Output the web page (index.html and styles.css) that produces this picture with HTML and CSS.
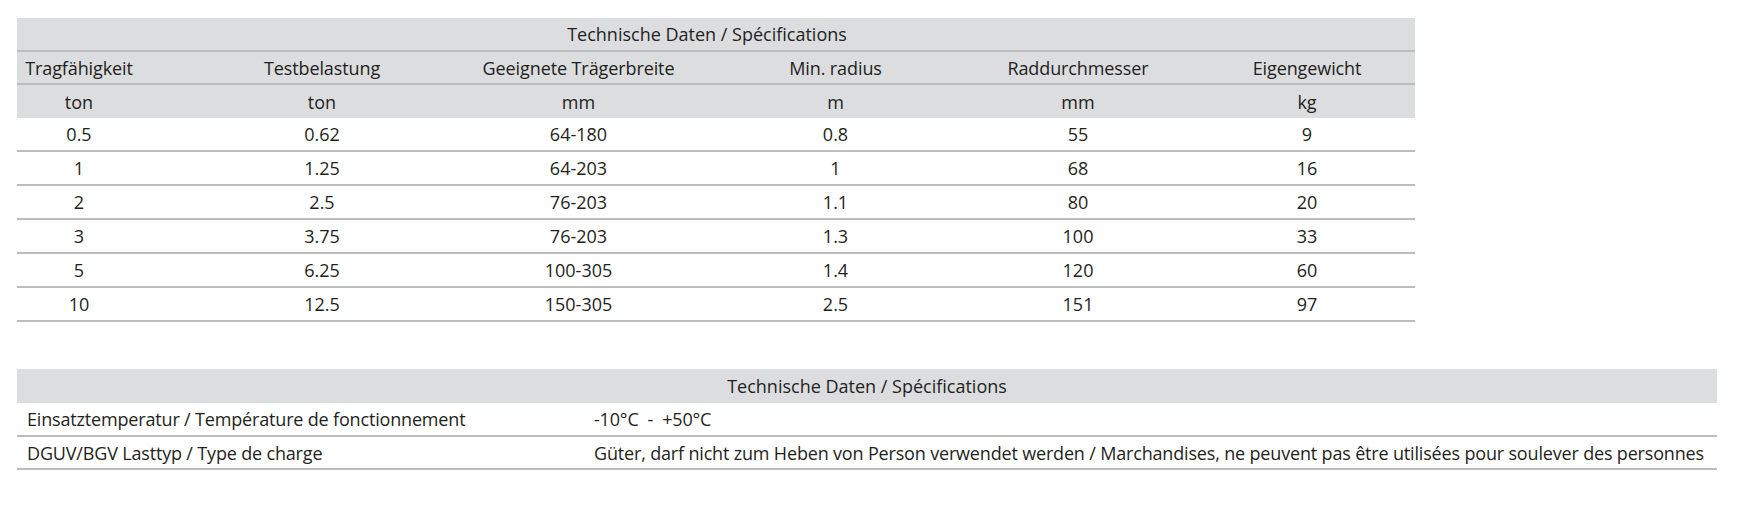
FILE: index.html
```html
<!DOCTYPE html>
<html lang="de">
<head>
<meta charset="utf-8">
<title>Technische Daten</title>
<link rel="stylesheet" href="styles.css">
</head>
<body>
<div class="page">
  <div class="spec">
    <div class="spec-title">Technische Daten / Spécifications</div>
    <div class="spec-row head">
      <div class="cell">Tragfähigkeit</div>
      <div class="cell">Testbelastung</div>
      <div class="cell">Geeignete Trägerbreite</div>
      <div class="cell">Min. radius</div>
      <div class="cell">Raddurchmesser</div>
      <div class="cell">Eigengewicht</div>
    </div>
    <div class="spec-row units">
      <div class="cell">ton</div>
      <div class="cell">ton</div>
      <div class="cell">mm</div>
      <div class="cell">m</div>
      <div class="cell">mm</div>
      <div class="cell">kg</div>
    </div>
    <div class="spec-row data">
      <div class="cell">0.5</div><div class="cell">0.62</div><div class="cell">64-180</div><div class="cell">0.8</div><div class="cell">55</div><div class="cell">9</div>
    </div>
    <div class="spec-row data">
      <div class="cell">1</div><div class="cell">1.25</div><div class="cell">64-203</div><div class="cell">1</div><div class="cell">68</div><div class="cell">16</div>
    </div>
    <div class="spec-row data">
      <div class="cell">2</div><div class="cell">2.5</div><div class="cell">76-203</div><div class="cell">1.1</div><div class="cell">80</div><div class="cell">20</div>
    </div>
    <div class="spec-row data">
      <div class="cell">3</div><div class="cell">3.75</div><div class="cell">76-203</div><div class="cell">1.3</div><div class="cell">100</div><div class="cell">33</div>
    </div>
    <div class="spec-row data">
      <div class="cell">5</div><div class="cell">6.25</div><div class="cell">100-305</div><div class="cell">1.4</div><div class="cell">120</div><div class="cell">60</div>
    </div>
    <div class="spec-row data">
      <div class="cell">10</div><div class="cell">12.5</div><div class="cell">150-305</div><div class="cell">2.5</div><div class="cell">151</div><div class="cell">97</div>
    </div>
  </div>

  <div class="props">
    <div class="props-title">Technische Daten / Spécifications</div>
    <div class="props-row">
      <div class="label">Einsatztemperatur / Température de fonctionnement</div>
      <div class="value">-10°C&nbsp; -&nbsp; +50°C</div>
    </div>
    <div class="props-row">
      <div class="label">DGUV/BGV Lasttyp / Type de charge</div>
      <div class="value">Güter, darf nicht zum Heben von Person verwendet werden / Marchandises, ne peuvent pas être utilisées pour soulever des personnes</div>
    </div>
  </div>
</div>
</body>
</html>
```

FILE: styles.css
```css
html, body {
  margin: 0;
  padding: 0;
  background: #ffffff;
}

body {
  font-family: "Open Sans", "Noto Sans", sans-serif;
  font-size: 18px;
  color: #231f20;
}

.page {
  padding: 18px 0 0 17px;
  display: flex;
  flex-direction: column;
  gap: 47px;
  align-items: flex-start;
}

.spec {
  width: 1398px;
  display: flex;
  flex-direction: column;
}

.spec-title,
.props-title {
  height: 34px;
  box-sizing: border-box;
  background: #dcdddf;
  display: flex;
  align-items: center;
  justify-content: center;
  white-space: nowrap;
}

.spec-title {
  border-bottom: 2px solid #bdbdbf;
  padding-right: 18px;
}

.spec-row {
  display: grid;
  grid-template-columns: 124px 362px 151px 363px 122px 336px;
  box-sizing: border-box;
  overflow: visible;
}

.spec-row.head {
  height: 33px;
  background: #dcdddf;
  border-bottom: 2px solid #bdbdbf;
  letter-spacing: -0.1px;
}

.spec-row.units {
  height: 33px;
  background: #dcdddf;
}

.spec-row.data {
  height: 34px;
  border-bottom: 2px solid #bcbcbc;
}

.cell {
  display: flex;
  align-items: center;
  justify-content: center;
  white-space: nowrap;
  min-width: 0;
}

.props {
  width: 1700px;
  display: flex;
  flex-direction: column;
}

.props-row {
  display: grid;
  grid-template-columns: 567px 1fr;
  height: 34px;
  box-sizing: border-box;
  border-bottom: 2px solid #bcbcbc;
  letter-spacing: -0.17px;
}

.props-row + .props-row {
  height: 33px;
}

.label,
.value {
  display: flex;
  align-items: center;
  padding-left: 10px;
  white-space: nowrap;
}
```
